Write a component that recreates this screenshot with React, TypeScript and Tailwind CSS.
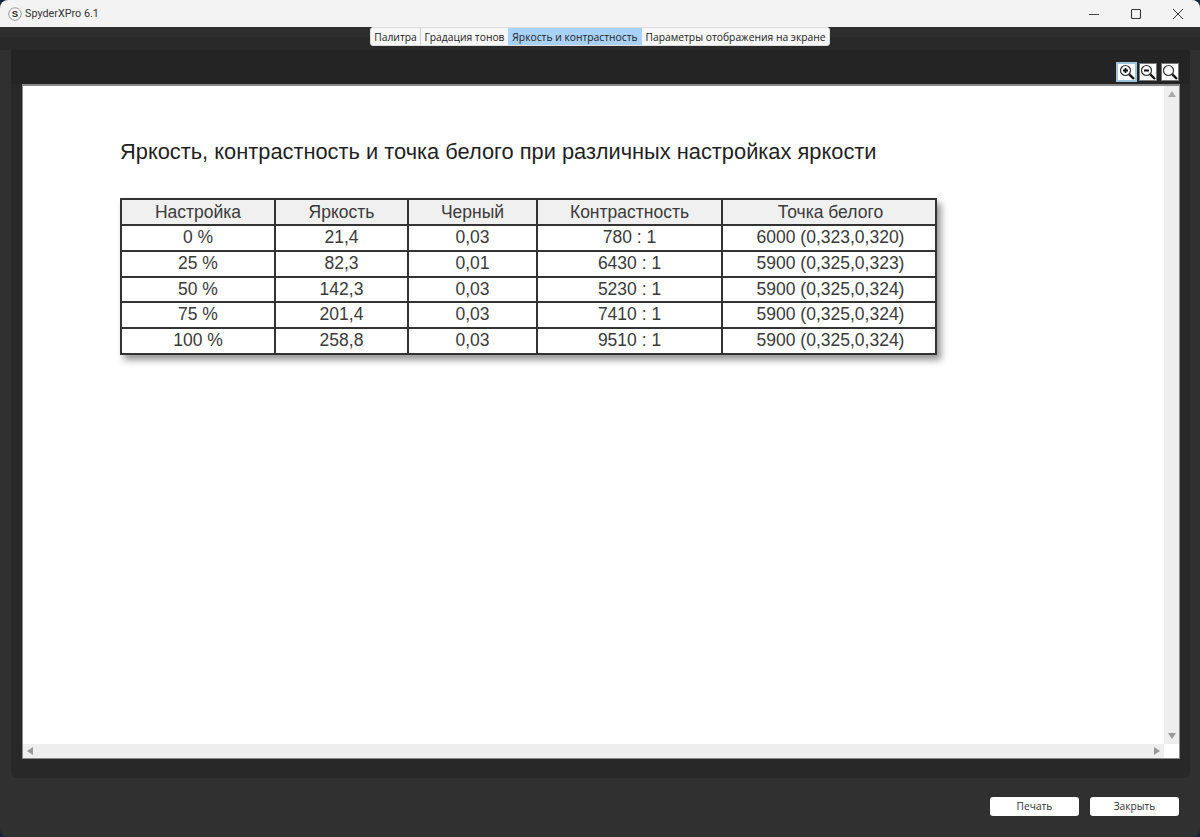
import React from "react";

const rows = [
  ["0 %", "21,4", "0,03", "780 : 1", "6000 (0,323,0,320)"],
  ["25 %", "82,3", "0,01", "6430 : 1", "5900 (0,325,0,323)"],
  ["50 %", "142,3", "0,03", "5230 : 1", "5900 (0,325,0,324)"],
  ["75 %", "201,4", "0,03", "7410 : 1", "5900 (0,325,0,324)"],
  ["100 %", "258,8", "0,03", "9510 : 1", "5900 (0,325,0,324)"],
];
const head = ["Настройка", "Яркость", "Черный", "Контрастность", "Точка белого"];
const gridCols = "grid grid-cols-[154px_133px_129px_185px_215px]";

function Mag({ kind }: { kind: "plus" | "minus" | "none" }) {
  return (
    <svg width="16" height="16" viewBox="0 0 16 16" fill="none">
      <circle cx="6.5" cy="6.5" r="5" stroke="#333" strokeWidth="1.2" fill="#fff" />
      <path d="M10.3 10.3 L15 15" stroke="#111" strokeWidth="2.4" />
      {kind !== "none" && <path d="M4 6.5 H9" stroke="#111" strokeWidth="1.8" />}
      {kind === "plus" && <path d="M6.5 4 V9" stroke="#111" strokeWidth="1.8" />}
    </svg>
  );
}

export default function App() {
  return (
    <div className="w-[1200px] h-[837px] bg-[#16243f] overflow-hidden font-['Liberation_Sans',sans-serif]">
      <div className="w-full h-full rounded-lg overflow-hidden flex flex-col bg-[#303030]">
        {/* Title bar */}
        <div className="h-[27px] shrink-0 bg-[#f3f3f3] flex items-center pl-2 text-[#222]">
          <svg width="14" height="14" viewBox="0 0 14 14" fill="none">
            <circle cx="7" cy="7" r="6.2" fill="#fff" stroke="#777" strokeWidth="0.8" />
            <text x="7" y="10.3" textAnchor="middle" fontSize="9.5" fontWeight="700" fill="#222" fontFamily="Liberation Sans">S</text>
          </svg>
          <span className="ml-[3px] pt-[2px] text-[10.8px] font-['Roboto',sans-serif] text-[#333]">SpyderXPro 6.1</span>
          <div className="ml-auto flex items-center h-full">
            <svg width="12" height="12" viewBox="0 0 12 12" className="mr-[30px]"><path d="M1 6.5 H11" stroke="#444" strokeWidth="1" /></svg>
            <svg width="12" height="12" viewBox="0 0 12 12" className="mr-[30px]"><rect x="1.5" y="1.5" width="9" height="9" rx="1" fill="none" stroke="#333" strokeWidth="1.1" /></svg>
            <svg width="12" height="12" viewBox="0 0 12 12" className="mr-4"><path d="M1 1 L11 11 M11 1 L1 11" stroke="#333" strokeWidth="1" /></svg>
          </div>
        </div>

        {/* Tabs strip */}
        <div className="h-[23px] shrink-0 flex justify-center bg-[linear-gradient(#2e2e2e_10px,#292929_10px)]">
          <div className="h-[19px] flex bg-[#f7f7f7] rounded-[3px] text-[10.3px] leading-[18px] text-[#222] border border-[#ddd] font-['Open_Sans','Liberation_Sans',sans-serif]">
            <div className="w-[50px] text-center border-r border-[#ccc]">Палитра</div>
            <div className="w-[87px] text-center">Градация тонов</div>
            <div className="w-[134px] text-center bg-[#a9d2fb] font-medium">Яркость и контрастность</div>
            <div className="w-[187px] text-center">Параметры отображения на экране</div>
          </div>
        </div>

        {/* Panel */}
        <div className="ml-[11px] mr-[10px] h-[728px] shrink-0 bg-[#282828] rounded-b-md flex flex-col">
          <div className="h-[34px] shrink-0 flex justify-end items-end pb-[2px] pr-[11px] bg-[#242424]">
            <div className="w-[21px] h-[20px] bg-white border-2 border-[#9fc3da] flex items-center justify-center"><Mag kind="plus" /></div>
            <div className="ml-[2px] mb-px w-[18px] h-[18px] bg-white border border-[#777] flex items-center justify-center"><Mag kind="minus" /></div>
            <div className="ml-[4px] mb-px w-[18px] h-[18px] bg-white border border-[#777] flex items-center justify-center"><Mag kind="none" /></div>
          </div>

          {/* Canvas */}
          <div className="ml-[11px] w-[1158px] h-[675px] shrink-0 bg-white border-t-2 border-l border-r border-b border-[#8a8a8a] flex flex-col">
            <div className="flex-1 min-h-0 flex">
              <div className="flex-1 pl-[97px] pt-[52px]">
                <h1 className="text-[21.84px] leading-[28px] text-[#1f1f1f] font-normal">
                  Яркость, контрастность и точка белого при различных настройках яркости
                </h1>
                <div className="mt-[32px] w-[817px] border-2 border-[#333] shadow-[4px_5px_7px_rgba(0,0,0,0.42)] text-[17.5px] text-[#3a3a3a] text-center">
                  <div className={`${gridCols} bg-[#f0f0f0] h-[24px] leading-[24px]`}>
                    {head.map((h, i) => (
                      <div key={h} className={i < 4 ? "border-r-2 border-[#333]" : ""}>{h}</div>
                    ))}
                  </div>
                  {rows.map((r) => (
                    <div key={r[0]} className={`${gridCols} bg-white h-[25.8px] leading-[22px] border-t-2 border-[#333]`}>
                      {r.map((c, i) => (
                        <div key={i} className={i < 4 ? "border-r-2 border-[#333]" : ""}>{c}</div>
                      ))}
                    </div>
                  ))}
                </div>
              </div>
              <div className="w-[15px] bg-[#eeeeee] flex flex-col items-center justify-between py-[5px]">
                <div className="w-0 h-0 border-x-[4px] border-x-transparent border-b-[6px] border-b-[#aaa]" />
                <div className="w-0 h-0 border-x-[4px] border-x-transparent border-t-[6px] border-t-[#999]" />
              </div>
            </div>
            <div className="h-[14px] shrink-0 flex">
              <div className="flex-1 bg-[#eeeeee] flex items-center justify-between px-[4px]">
                <div className="w-0 h-0 border-y-[4px] border-y-transparent border-r-[6px] border-r-[#999]" />
                <div className="w-0 h-0 border-y-[4px] border-y-transparent border-l-[6px] border-l-[#999]" />
              </div>
              <div className="w-[15px] bg-white" />
            </div>
          </div>
        </div>

        {/* Footer */}
        <div className="flex justify-end gap-[11px] pt-[19px] pr-[21px]">
          <button className="w-[89px] h-[19px] bg-white rounded-[3px] text-[10.2px] text-[#333] font-['Open_Sans','Liberation_Sans',sans-serif]">Печать</button>
          <button className="w-[89px] h-[19px] bg-white rounded-[3px] text-[10.2px] text-[#333] font-['Open_Sans','Liberation_Sans',sans-serif]">Закрыть</button>
        </div>
      </div>
    </div>
  );
}
